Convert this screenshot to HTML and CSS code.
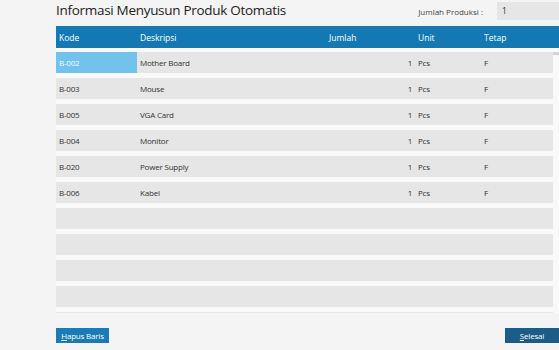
FILE: index.html
```html
<!DOCTYPE html>
<html lang="id">
<head>
    <meta charset="UTF-8">
    <meta name="viewport" content="width=device-width, initial-scale=1.0">
    <title>Informasi Menyusun Produk Otomatis</title>
    <link rel="stylesheet" href="styles.css">
</head>
<body>
    <div class="halaman">
        <div class="atas">
            <h1 class="judul">Informasi Menyusun Produk Otomatis</h1>
            <div class="produksi">
                <label class="label-produksi">Jumlah Produksi :</label>
                <div class="input-produksi">1</div>
            </div>
        </div>

        <div class="tabel">
            <div class="kepala baris-grid">
                <div class="sel">Kode</div>
                <div class="sel">Deskripsi</div>
                <div class="sel">Jumlah</div>
                <div class="sel">Unit</div>
                <div class="sel">Tetap</div>
            </div>
            <div class="isi">
                <div class="daftar">
                    <div class="baris baris-grid">
                        <div class="sel terpilih">B-002</div>
                        <div class="sel">Mother Board</div>
                        <div class="sel angka">1</div>
                        <div class="sel">Pcs</div>
                        <div class="sel">F</div>
                    </div>
                    <div class="baris baris-grid">
                        <div class="sel">B-003</div>
                        <div class="sel">Mouse</div>
                        <div class="sel angka">1</div>
                        <div class="sel">Pcs</div>
                        <div class="sel">F</div>
                    </div>
                    <div class="baris baris-grid">
                        <div class="sel">B-005</div>
                        <div class="sel">VGA Card</div>
                        <div class="sel angka">1</div>
                        <div class="sel">Pcs</div>
                        <div class="sel">F</div>
                    </div>
                    <div class="baris baris-grid">
                        <div class="sel">B-004</div>
                        <div class="sel">Monitor</div>
                        <div class="sel angka">1</div>
                        <div class="sel">Pcs</div>
                        <div class="sel">F</div>
                    </div>
                    <div class="baris baris-grid">
                        <div class="sel">B-020</div>
                        <div class="sel">Power Supply</div>
                        <div class="sel angka">1</div>
                        <div class="sel">Pcs</div>
                        <div class="sel">F</div>
                    </div>
                    <div class="baris baris-grid">
                        <div class="sel">B-006</div>
                        <div class="sel">Kabel</div>
                        <div class="sel angka">1</div>
                        <div class="sel">Pcs</div>
                        <div class="sel">F</div>
                    </div>
                    <div class="baris"></div>
                    <div class="baris"></div>
                    <div class="baris"></div>
                    <div class="baris"></div>
                    <div class="baris"></div>
                </div>
                <div class="gulir"><div class="gulir-pegangan"></div></div>
            </div>
        </div>

        <div class="bawah">
            <button class="tombol"><u>H</u>apus Baris</button>
            <button class="tombol tombol-gelap"><u>S</u>elesai</button>
        </div>
    </div>
</body>
</html>
```

FILE: styles.css
```css
*{
    padding: 0;
    margin: 0;
    box-sizing: border-box;
}
body{
    background-color: #f4f4f4;
    width: 559px;
    height: 350px;
    overflow: hidden;
    font-family: "Open Sans", "Noto Sans", sans-serif;
    color: #333333;
}
.halaman{
    padding-left: 56px;
    display: flex;
    flex-direction: column;
    height: 350px;
}
.atas{
    height: 26px;
    display: flex;
    justify-content: space-between;
    align-items: flex-start;
}
.judul{
    font-weight: normal;
    font-size: 13.5px;
    line-height: 18px;
    margin-top: 1px;
    color: #222222;
    letter-spacing: -0.3px;
    white-space: nowrap;
}
.produksi{
    display: flex;
    align-items: center;
    padding-top: 2px;
}
.label-produksi{
    font-size: 8px;
    color: #444444;
    margin-right: 14px;
    white-space: nowrap;
}
.input-produksi{
    width: 62px;
    height: 18px;
    background-color: #e6e6e6;
    font-size: 8.5px;
    line-height: 18px;
    padding-left: 5px;
}
.tabel{
    display: flex;
    flex-direction: column;
}
.baris-grid{
    display: grid;
    grid-template-columns: 81px 189px 89px 66px 72px;
    align-items: center;
}
.kepala{
    height: 22px;
    background-color: #1479b3;
    color: #ffffff;
    font-size: 8.5px;
}
.sel{
    padding-left: 3px;
    height: 100%;
    display: flex;
    align-items: center;
    white-space: nowrap;
}
.isi{
    height: 265px;
    overflow: hidden;
    background-color: #f9f9f9;
    display: flex;
}
.daftar{
    width: 497px;
    padding-top: 4px;
    display: flex;
    flex-direction: column;
    gap: 5px;
}
.baris{
    height: 21px;
    flex-shrink: 0;
    background-color: #e6e6e6;
    font-size: 8px;
    letter-spacing: -0.2px;
}
.angka{
    justify-content: flex-end;
    padding-right: 3px;
}
.terpilih{
    background-color: #71c2ec;
    color: #f4fbff;
}
.gulir{
    width: 6px;
    padding-top: 4px;
}
.gulir-pegangan{
    height: 3px;
    background-color: #d2d2d2;
}
.bawah{
    display: flex;
    justify-content: space-between;
    margin-top: 15px;
}
.tombol{
    border: none;
    outline: none;
    height: 15px;
    padding: 0;
    background-color: #1a7bb6;
    color: #ffffff;
    font-family: "Open Sans", "Noto Sans", sans-serif;
    font-size: 8px;
    line-height: 15px;
    width: 53px;
    white-space: nowrap;
    letter-spacing: -0.2px;
}
.tombol-gelap{
    background-color: #1c5c86;
    width: 54px;
}
```
